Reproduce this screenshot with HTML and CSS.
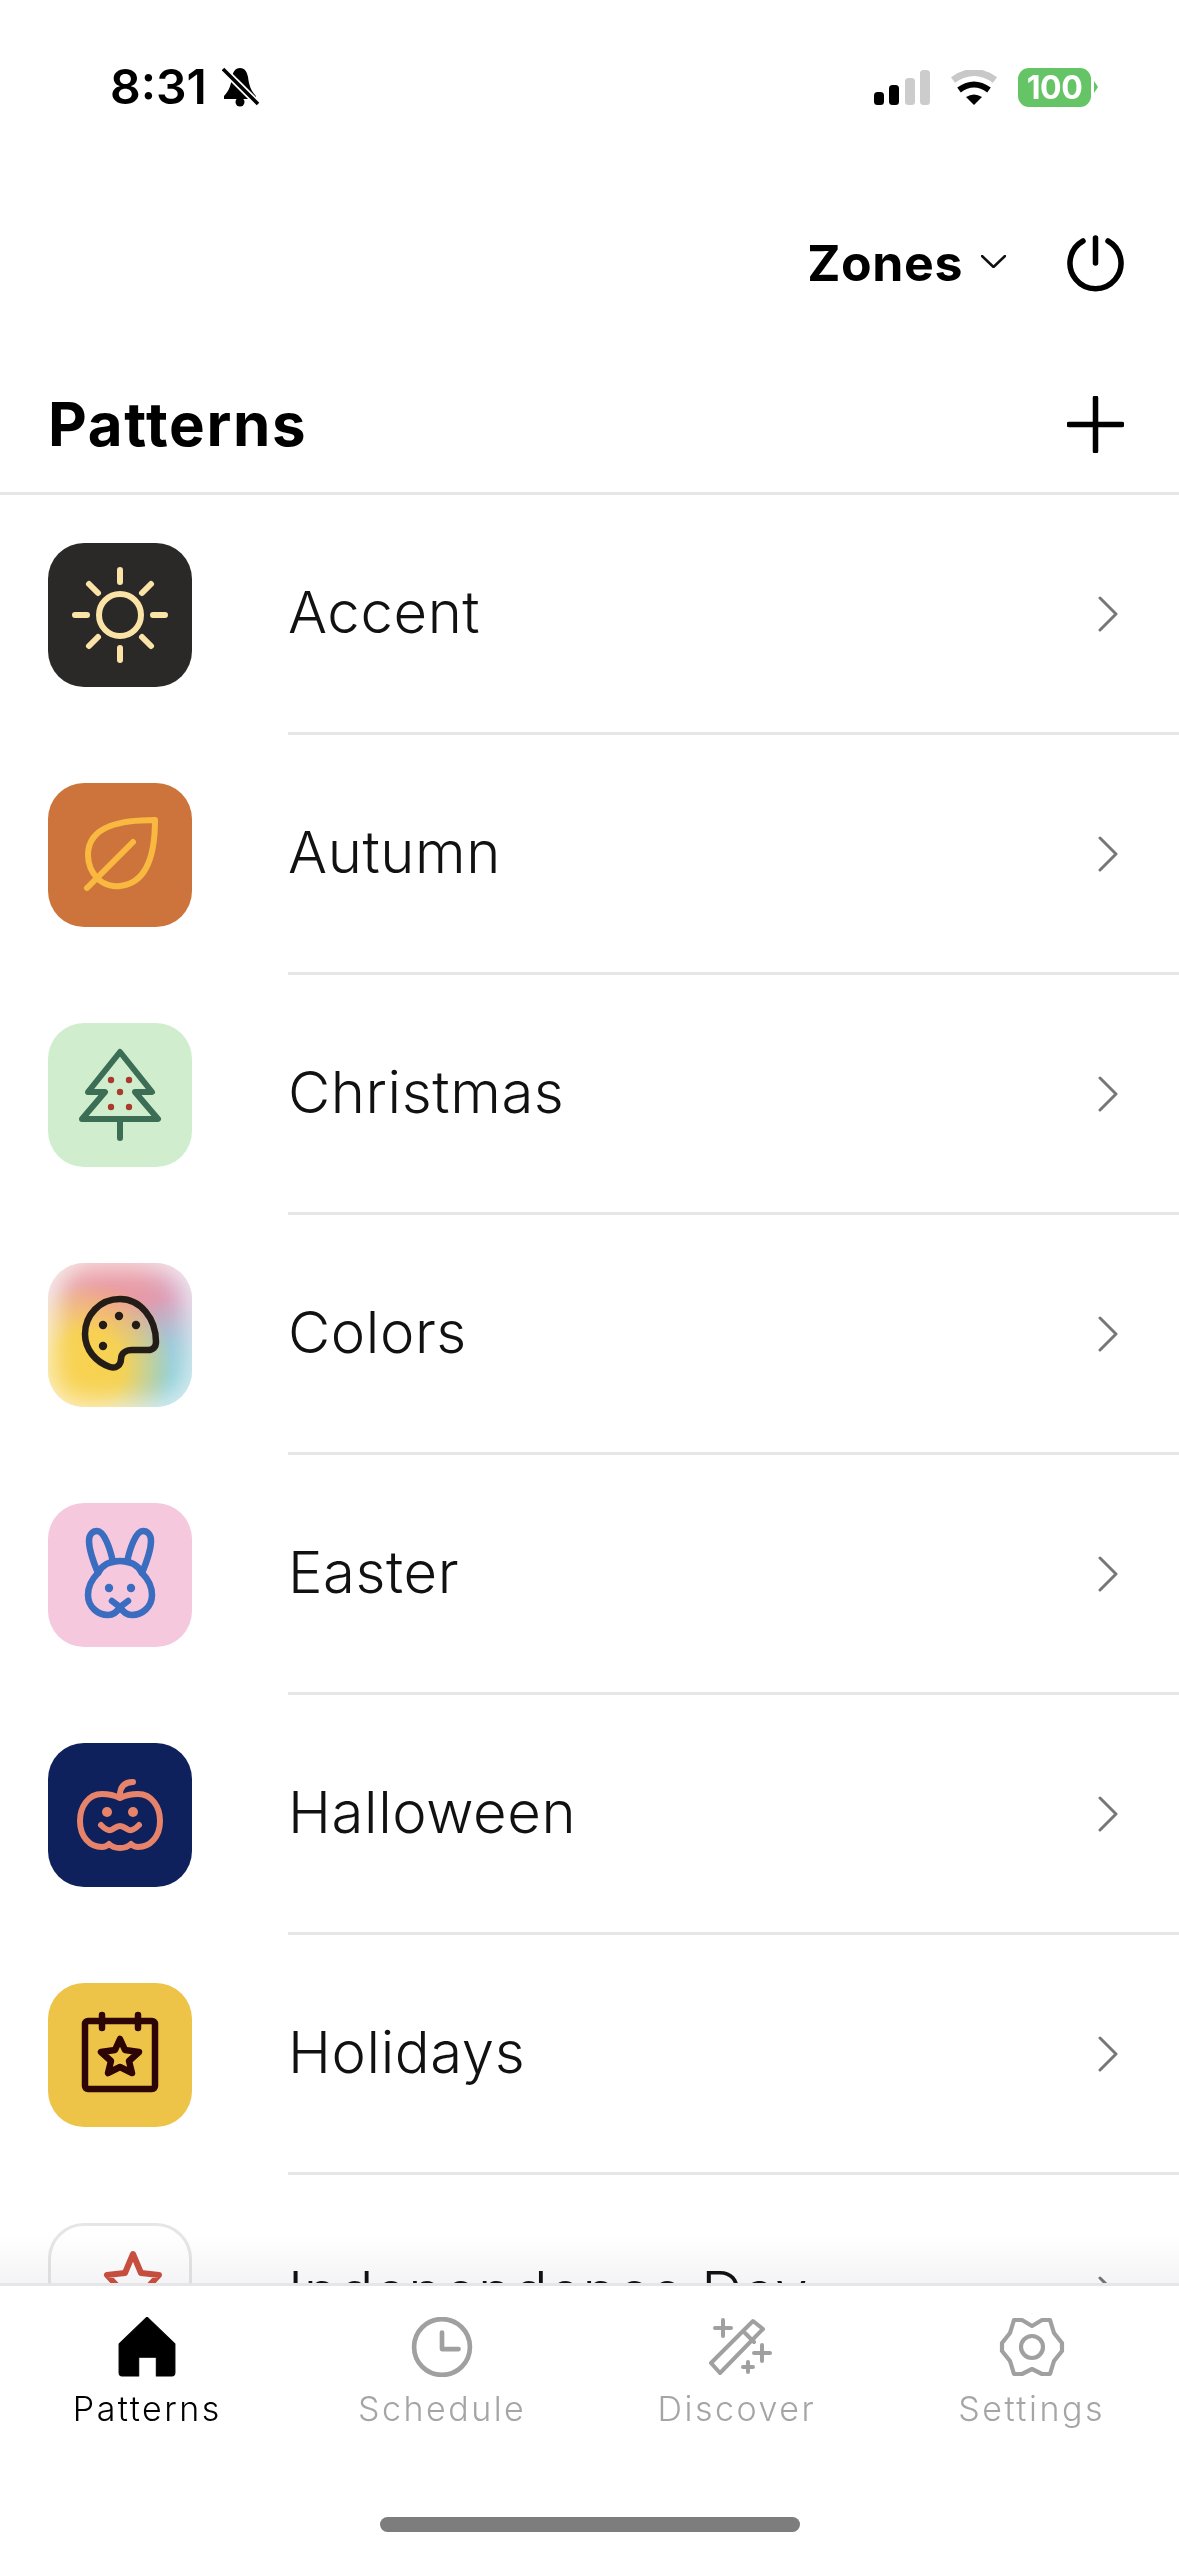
FILE: index.html
```html
<!DOCTYPE html>
<html lang="en">
<head>
<meta charset="utf-8">
<title>Patterns</title>
<link rel="stylesheet" href="styles.css">
</head>
<body>
<div class="screen">
  <div class="status">
    <div class="status-left">
      <span class="time">8:31</span>
      <svg class="bell" viewBox="0 0 38 40"><path d="M18 1C13 1 11 5 10 10C9 18 7 24 2 29V32H34V29C29 24 27 18 26 10C25 5 23 1 18 1Z" fill="#000"/><circle cx="18" cy="35" r="4.5" fill="#000"/><path d="M1 2L36 37" stroke="#fff" stroke-width="7"/><path d="M1 2L36 37" stroke="#000" stroke-width="3.5"/></svg>
    </div>
    <div class="status-right">
      <svg class="signal" viewBox="0 0 56 35"><rect x="0" y="22" width="10" height="13" rx="3.5" fill="#000"/><rect x="15" y="15" width="10" height="20" rx="3.5" fill="#000"/><rect x="31" y="8" width="10" height="27" rx="3.5" fill="#ccc"/><rect x="46" y="0" width="10" height="35" rx="3.5" fill="#ccc"/></svg>
      <svg class="wifi" viewBox="0 0 48 35"><path d="M3 10Q24 -5 45 10" fill="none" stroke="#c8c8c8" stroke-width="7"/><path d="M9 20Q24 9 39 20" fill="none" stroke="#000" stroke-width="6"/><path d="M16 27Q24 22 32 27L24 35Z" fill="#000"/></svg>
      <div class="battery">100</div>
    </div>
  </div>

  <div class="topbar">
    <span class="zones">Zones</span>
    <svg class="zones-chev" viewBox="0 0 25 13"><path d="M1 1L12.5 12L24 1" fill="none" stroke="#111" stroke-width="2.5" stroke-linecap="round" stroke-linejoin="round"/></svg>
    <svg class="action" viewBox="0 0 57 57"><path d="M16 6A25.5 25.5 0 1 0 41 6" fill="none" stroke="#000" stroke-width="5.5" stroke-linecap="round"/><path d="M28.5 3V28" fill="none" stroke="#000" stroke-width="5.5" stroke-linecap="round"/></svg>
  </div>

  <div class="title-row">
    <h1 class="title">Patterns</h1>
    <svg class="action" viewBox="0 0 57 57"><path d="M28.5 2V55M2 28.5H55" fill="none" stroke="#000" stroke-width="5.5" stroke-linecap="round"/></svg>
  </div>

  <div class="list">
    <div class="row">
      <div class="tile tile-accent"><svg viewBox="0 0 144 144" fill="none" stroke="#fbe3a8" stroke-width="6" stroke-linecap="round"><circle cx="72" cy="72" r="21"/><path d="M72 27V39M72 105V117M27 72H39M105 72H117M41 41L50 50M94 94L103 103M41 103L50 94M94 50L103 41"/></svg></div>
      <div class="row-body"><span class="label">Accent</span><svg class="chev" viewBox="0 0 20 36"><path d="M2 2L18 18L2 34"/></svg></div>
    </div>
    <div class="row">
      <div class="tile tile-autumn"><svg viewBox="0 0 144 144" fill="none" stroke="#f9b840" stroke-width="6" stroke-linecap="round" stroke-linejoin="round"><path d="M107 37C75 37 40 42 40 72C40 82 44 90 50 96C56 102 66 104 72 103C100 100 107 70 107 37Z"/><path d="M39 105L85 59"/></svg></div>
      <div class="row-body"><span class="label">Autumn</span><svg class="chev" viewBox="0 0 20 36"><path d="M2 2L18 18L2 34"/></svg></div>
    </div>
    <div class="row">
      <div class="tile tile-christmas"><svg viewBox="0 0 144 144" fill="none" stroke="#3c6e55" stroke-width="6" stroke-linecap="round" stroke-linejoin="round"><path d="M72 29L104 69H87L110 96H34L57 69H40Z"/><path d="M72 96V115"/><g fill="#a83a2e" stroke="none"><circle cx="63" cy="57" r="3.2"/><circle cx="81" cy="57" r="3.2"/><circle cx="72" cy="69" r="3.2"/><circle cx="63" cy="84" r="3.2"/><circle cx="81" cy="84" r="3.2"/></g></svg></div>
      <div class="row-body"><span class="label">Christmas</span><svg class="chev" viewBox="0 0 20 36"><path d="M2 2L18 18L2 34"/></svg></div>
    </div>
    <div class="row">
      <div class="tile tile-colors"><svg viewBox="0 0 144 144" fill="none" stroke="#231c17" stroke-width="6.5" stroke-linejoin="round"><path d="M72 36C52 36 37 52 37 71C37 87 48 99 62 104C68 106 73 102 73 96C73 90 78 87 84 87H100C105 87 108 84 108 79C108 55 92 36 72 36Z"/><g fill="#231c17" stroke="none"><circle cx="71" cy="53" r="4.2"/><circle cx="55" cy="62" r="4.2"/><circle cx="88" cy="62" r="4.2"/><circle cx="55" cy="83" r="4.2"/></g></svg></div>
      <div class="row-body"><span class="label">Colors</span><svg class="chev" viewBox="0 0 20 36"><path d="M2 2L18 18L2 34"/></svg></div>
    </div>
    <div class="row">
      <div class="tile tile-easter"><svg viewBox="0 0 144 144" fill="none" stroke="#3a6cc0" stroke-width="6.5" stroke-linecap="round" stroke-linejoin="round"><path d="M50 70C54 62 62 58 72 58C82 58 90 62 94 70C100 76 104 84 104 92C104 104 94 112 84 112C79 112 75 109 72 104C69 109 65 112 60 112C50 112 40 104 40 92C40 84 44 76 50 70Z"/><path d="M50 70C45 58 41 46 41 38C41 31 45 28 49 28C56 28 62 45 65 59"/><path d="M94 70C99 58 103 46 103 38C103 31 99 28 95 28C88 28 82 45 79 59"/><path d="M64 98L72 104L80 98"/><g fill="#3a6cc0" stroke="none"><circle cx="61" cy="85" r="4.2"/><circle cx="83" cy="85" r="4.2"/></g></svg></div>
      <div class="row-body"><span class="label">Easter</span><svg class="chev" viewBox="0 0 20 36"><path d="M2 2L18 18L2 34"/></svg></div>
    </div>
    <div class="row">
      <div class="tile tile-halloween"><svg viewBox="0 0 144 144" fill="none" stroke="#e7836a" stroke-width="6" stroke-linecap="round" stroke-linejoin="round"><path d="M72 55C78 52 83 51 90 51C104 51 112 64 112 78C112 94 102 104 90 104C87 104 85 103 83 101C80 104 76 105 72 105C68 105 64 104 61 101C59 103 57 104 54 104C42 104 32 94 32 78C32 64 40 51 54 51C61 51 66 52 72 55Z"/><path d="M72 52C72 44 76 39 85 39"/><path d="M53 82C57 86 60 88 63 87C66 86 68 83 72 83C76 83 78 86 81 87C84 88 87 86 91 82"/><g fill="#e7836a" stroke="none"><circle cx="59" cy="69" r="5"/><circle cx="85" cy="69" r="5"/></g></svg></div>
      <div class="row-body"><span class="label">Halloween</span><svg class="chev" viewBox="0 0 20 36"><path d="M2 2L18 18L2 34"/></svg></div>
    </div>
    <div class="row">
      <div class="tile tile-holidays"><svg viewBox="0 0 144 144" fill="none" stroke="#2e0505" stroke-width="6.5" stroke-linecap="round" stroke-linejoin="round"><rect x="37" y="38" width="70" height="68" rx="3"/><path d="M54 32V45M90 32V45"/><path d="M72 56L77 67L91 69L81 78L84 90L72 84L60 90L63 78L53 69L67 67Z"/></svg></div>
      <div class="row-body"><span class="label">Holidays</span><svg class="chev" viewBox="0 0 20 36"><path d="M2 2L18 18L2 34"/></svg></div>
    </div>
    <div class="row">
      <div class="tile tile-independence"><svg viewBox="0 0 144 144" fill="none" stroke="#cc5040" stroke-width="6" stroke-linecap="round" stroke-linejoin="round"><path d="M85 31L93 50L111 52L98 66L102 86L85 76L68 86L72 66L59 52L77 50Z"/></svg></div>
      <div class="row-body"><span class="label">Independence Day</span><svg class="chev" viewBox="0 0 20 36"><path d="M2 2L18 18L2 34"/></svg></div>
    </div>
    <div class="fade"></div>
  </div>

  <nav class="tabbar">
    <div class="tabs">
      <div class="tab tab-active">
        <svg viewBox="0 0 60 58"><path d="M30 0L57 26V54Q57 57 54 57H39V39H22V57H6Q3 57 3 54V26Z" fill="#000" stroke="#000" stroke-linejoin="round"/></svg>
        <span>Patterns</span>
      </div>
      <div class="tab">
        <svg viewBox="0 0 60 58" fill="none" stroke="#a0a0a0" stroke-width="4.5" stroke-linecap="round" stroke-linejoin="round"><circle cx="30" cy="29" r="27"/><path d="M30 15V31H46"/></svg>
        <span>Schedule</span>
      </div>
      <div class="tab">
        <svg viewBox="2 7 70 60" fill="none" stroke="#a0a0a0" stroke-width="4" stroke-linecap="round" stroke-linejoin="round"><path d="M53 11L63 19L20 63L11 53Z"/><path d="M45 23L54 32M23 10V26M15 18H31M62 35V51M54 43H70M48 52V62M43 57H53"/></svg>
        <span>Discover</span>
      </div>
      <div class="tab">
        <svg viewBox="0 0 64 60" fill="none" stroke="#a0a0a0" stroke-width="4.2" stroke-linejoin="round"><path d="M32 9L42 3H50L54 16L62 26V34L54 44L50 57H42L32 52L22 57H14L10 44L2 34V26L10 16L14 3H22Z"/><circle cx="32" cy="30" r="11"/></svg>
        <span>Settings</span>
      </div>
    </div>
    <div class="home-bar"></div>
  </nav>
</div>
</body>
</html>
```
FILE: styles.css
```css
* { box-sizing: border-box; }
html, body { margin: 0; padding: 0; background: #fff; }
body { font-family: Inter, "Noto Sans", sans-serif; color: #111; }
.screen { width: 1179px; height: 2556px; display: flex; flex-direction: column; overflow: hidden; background: #fff; }

.status { height: 130px; padding: 44px 81px 0 110px; display: flex; justify-content: space-between; align-items: center; flex: none; }
.status-left, .status-right { display: flex; align-items: center; }
.status-left { gap: 15px; }
.status-right { gap: 20px; }
.time { font-size: 48px; font-weight: 600; letter-spacing: 0; line-height: 1; color: #000; }
.bell { width: 38px; height: 40px; }
.signal { width: 56px; height: 35px; }
.wifi { width: 48px; height: 35px; }
.battery { position: relative; width: 73px; height: 39px; margin-right: 7px; border-radius: 11px; background: #65c466; color: #fff; font-size: 32px; font-weight: 700; line-height: 39px; text-align: center; letter-spacing: -.5px; }
.battery::after { content: ""; position: absolute; left: 76px; top: 13px; width: 0; height: 0; border-left: 4px solid #65c466; border-top: 6px solid transparent; border-bottom: 6px solid transparent; }

.topbar { margin-top: 90px; height: 86px; flex: none; display: flex; justify-content: flex-end; align-items: center; padding-right: 55px; }
.zones { font-size: 50px; font-weight: 700; letter-spacing: .6px; color: #000; }
.zones-chev { width: 25px; height: 13px; margin: 0 61px 0 18px; position: relative; top: -2px; }
.action { width: 57px; height: 57px; display: block; }

.title-row { height: 189px; flex: none; padding: 50px 55px 0 48px; display: flex; justify-content: space-between; align-items: center; border-bottom: 3px solid #e5e6e8; }
.title { margin: 0; font-size: 60px; font-weight: 700; letter-spacing: 1.7px; color: #000; line-height: 1; }

.list { position: relative; flex: 1; min-height: 0; overflow: hidden; }
.row { height: 240px; display: flex; align-items: center; padding-left: 48px; }
.tile { width: 144px; height: 144px; flex: none; border-radius: 36px; overflow: hidden; margin-right: 96px; }
.tile svg { display: block; width: 144px; height: 144px; }
.tile-accent { background: #2a2927; }
.tile-autumn { background: #cd743c; }
.tile-christmas { background: #d0eece; }
.tile-colors { box-shadow: inset 0 0 22px 8px rgba(255,255,255,.55); background:
  radial-gradient(circle at 28% 72%, #f8d24f 0, rgba(248,210,79,.95) 24%, rgba(248,210,79,0) 58%),
  radial-gradient(circle at 78% 80%, #8fd0da 0, rgba(143,208,218,.75) 22%, rgba(143,208,218,0) 50%),
  radial-gradient(circle at 42% 24%, #ea98a0 0, rgba(234,152,160,.8) 26%, rgba(234,152,160,0) 58%),
  radial-gradient(circle at 72% 30%, #d69ac6 0, rgba(214,154,198,.6) 22%, rgba(214,154,198,0) 55%),
  radial-gradient(circle at 90% 55%, #a9c4da 0, rgba(169,196,218,0) 50%),
  #ece6e0; }
.tile-easter { background: #f5c8dd; }
.tile-halloween { background: #0f215c; }
.tile-holidays { background: #edc448; }
.tile-independence { background: #fff; border: 3px solid #e6e6e6; }
.tile-independence svg { margin: -3px; }

.row-body { flex: 1; height: 240px; display: flex; justify-content: space-between; align-items: center; padding-right: 61px; border-bottom: 3px solid #e5e6e8; }
.label { font-size: 58px; font-weight: 350; letter-spacing: .6px; color: #111; margin-bottom: 3px; }
.chev { width: 20px; height: 36px; fill: none; stroke: #777; stroke-width: 3; stroke-linecap: round; stroke-linejoin: round; }

.fade { position: absolute; left: 0; right: 0; bottom: 0; height: 48px; background: linear-gradient(#fff, #f4f4f6); mix-blend-mode: multiply; }

.tabbar { height: 273px; flex: none; border-top: 3px solid #e5e6e8; background: #fff; }
.tabs { height: 231px; display: flex; padding-top: 31px; }
.tab { flex: 1; display: flex; flex-direction: column; align-items: center; color: #a5a5a5; font-size: 34px; font-weight: 350; letter-spacing: 2.5px; line-height: 40px; }
.tab svg { height: 60px; width: 70px; display: block; margin-bottom: 12px; }
.tab-active { color: #000; }
.home-bar { width: 420px; height: 15px; margin: 0 auto; border-radius: 8px; background: #7d7d7d; }
```
